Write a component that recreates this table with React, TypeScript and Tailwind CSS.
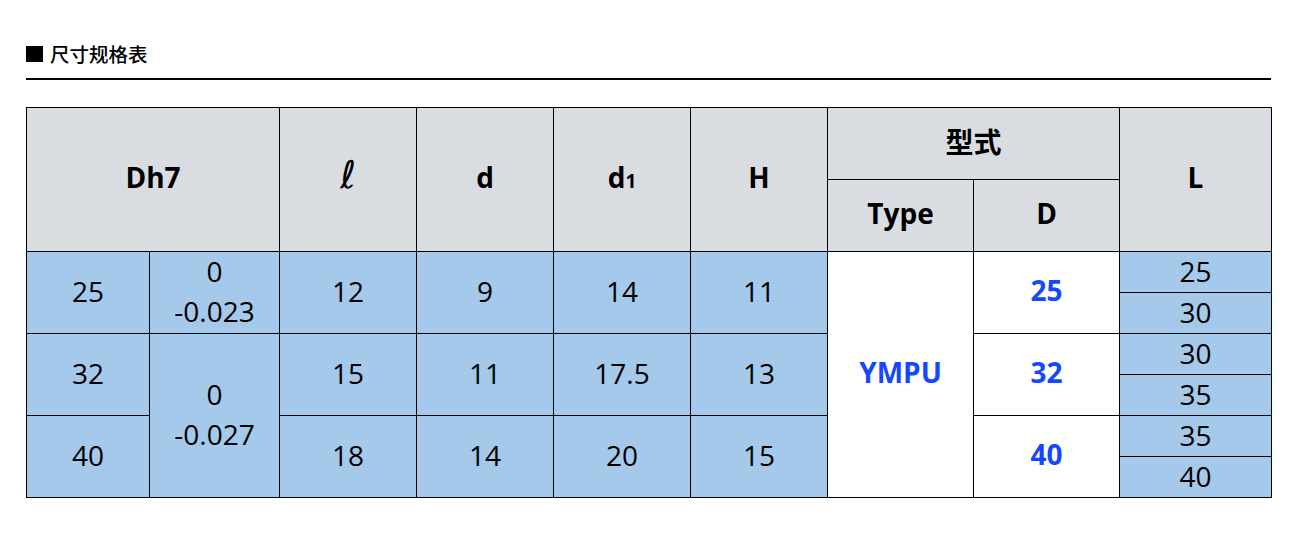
import React from 'react'

const FONT = { fontFamily: '"Open Sans", "Noto Sans CJK SC", sans-serif' }

const hd = 'border border-black bg-[#d9dde2] text-center align-middle font-bold text-[28px] p-0 pb-[5px]'
const bd = 'border border-black bg-[#a4c9eb] text-center align-middle text-[28px] leading-[40px] p-0 pb-[4px]'
const bd2 = 'border border-black bg-[#a4c9eb] text-center align-middle text-[28px] leading-[40px] p-0'
const lc = 'border border-black bg-[#a4c9eb] text-center align-middle text-[28px] leading-[38px] p-0 pb-[2px]'
const wh = 'border border-black bg-white text-center align-middle font-bold text-[28px] text-[#1448ff] p-0 pb-[5px]'

function Tol({ v }: { v: string }) {
  return (
    <div className="-mt-[4px]">
      <div>0</div>
      <div>{v}</div>
    </div>
  )
}

export default function App() {
  return (
    <div className="bg-white w-[1300px] h-[550px] px-[26px] pt-[44px] text-black" style={FONT}>
      <div className="flex items-center h-[20px] gap-[7px]">
        <div className="w-[17px] h-[16px] bg-black" />
        <span className="text-[19.5px] font-medium leading-none" style={{ fontFamily: '"Noto Sans CJK SC", sans-serif' }}>
          尺寸规格表
        </span>
      </div>
      <div className="mt-[14px] w-[1245px] h-[2px] bg-black" />

      <table className="mt-[27px] w-[1245px] table-fixed border-collapse">
        <colgroup>
          <col className="w-[123px]" />
          <col className="w-[130px]" />
          <col className="w-[137px]" />
          <col className="w-[137px]" />
          <col className="w-[137px]" />
          <col className="w-[137px]" />
          <col className="w-[146px]" />
          <col className="w-[146px]" />
          <col className="w-[152px]" />
        </colgroup>
        <thead>
          <tr className="h-[72px]">
            <th colSpan={2} rowSpan={2} className={hd}>Dh7</th>
            <th rowSpan={2} className={hd + ' !font-normal'}>
              <span className="text-[38px] leading-none italic" style={{ fontFamily: '"DejaVu Sans", sans-serif' }}>ℓ</span>
            </th>
            <th rowSpan={2} className={hd}>d</th>
            <th rowSpan={2} className={hd}>
              d<span className="text-[19px]">1</span>
            </th>
            <th rowSpan={2} className={hd}>H</th>
            <th colSpan={2} className={hd} style={{ fontFamily: '"Noto Sans CJK SC", sans-serif' }}>型式</th>
            <th rowSpan={2} className={hd}>L</th>
          </tr>
          <tr className="h-[72px]">
            <th className={hd}>Type</th>
            <th className={hd}>D</th>
          </tr>
        </thead>
        <tbody>
          <tr className="h-[40px]">
            <td rowSpan={2} className={bd}>25</td>
            <td rowSpan={2} className={bd2}><Tol v="-0.023" /></td>
            <td rowSpan={2} className={bd}>12</td>
            <td rowSpan={2} className={bd}>9</td>
            <td rowSpan={2} className={bd}>14</td>
            <td rowSpan={2} className={bd}>11</td>
            <td rowSpan={6} className={wh}>YMPU</td>
            <td rowSpan={2} className={wh}>25</td>
            <td className={lc}>25</td>
          </tr>
          <tr className="h-[40px]">
            <td className={lc}>30</td>
          </tr>
          <tr className="h-[40px]">
            <td rowSpan={2} className={bd}>32</td>
            <td rowSpan={4} className={bd2}><Tol v="-0.027" /></td>
            <td rowSpan={2} className={bd}>15</td>
            <td rowSpan={2} className={bd}>11</td>
            <td rowSpan={2} className={bd}>17.5</td>
            <td rowSpan={2} className={bd}>13</td>
            <td rowSpan={2} className={wh}>32</td>
            <td className={lc}>30</td>
          </tr>
          <tr className="h-[40px]">
            <td className={lc}>35</td>
          </tr>
          <tr className="h-[40px]">
            <td rowSpan={2} className={bd}>40</td>
            <td rowSpan={2} className={bd}>18</td>
            <td rowSpan={2} className={bd}>14</td>
            <td rowSpan={2} className={bd}>20</td>
            <td rowSpan={2} className={bd}>15</td>
            <td rowSpan={2} className={wh}>40</td>
            <td className={lc}>35</td>
          </tr>
          <tr className="h-[40px]">
            <td className={lc}>40</td>
          </tr>
        </tbody>
      </table>
    </div>
  )
}
